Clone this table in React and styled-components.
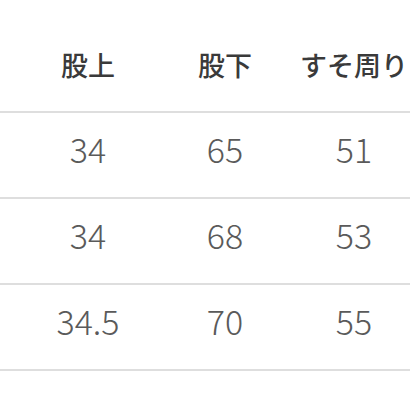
import React from 'react'
import styled, { createGlobalStyle } from 'styled-components'

const GlobalStyle = createGlobalStyle`
    html, body {
        margin: 0;
        padding: 0;
        background: #fff;
        overflow: hidden;
    }
    body {
        font-family: "Noto Sans CJK JP", "Noto Sans", sans-serif;
    }
`

const Table = styled.div`
    width: 410px;
    height: 410px;
    overflow: hidden;
`

const Row = styled.div`
    display: grid;
    grid-template-columns: 138px 136px 122px;
    padding-left: 19px;
    height: ${p => p.head ? 111 : 84}px;
    border-bottom: 2px solid #dedede;
    align-items: center;
    white-space: nowrap;
`

const HeadCell = styled.div`
    text-align: center;
    font-size: 27px;
    font-weight: 500;
    color: #3a3a3a;
    line-height: 1;
    padding-top: 18px;
`

const Cell = styled.div`
    text-align: center;
    font-size: 34px;
    font-weight: 300;
    color: #5a5a5a;
    line-height: 1;
    padding-bottom: 12px;
`

const headers = ['股上', '股下', 'すそ周り']
const rows = [
    ['34', '65', '51'],
    ['34', '68', '53'],
    ['34.5', '70', '55'],
]

const App = () => (
    <>
        <GlobalStyle />
        <Table>
            <Row head>
                {headers.map(h => <HeadCell key={h}>{h}</HeadCell>)}
            </Row>
            {rows.map((r, i) => (
                <Row key={i}>
                    {r.map((v, j) => <Cell key={j}>{v}</Cell>)}
                </Row>
            ))}
            <Row />
        </Table>
    </>
)

export default App
